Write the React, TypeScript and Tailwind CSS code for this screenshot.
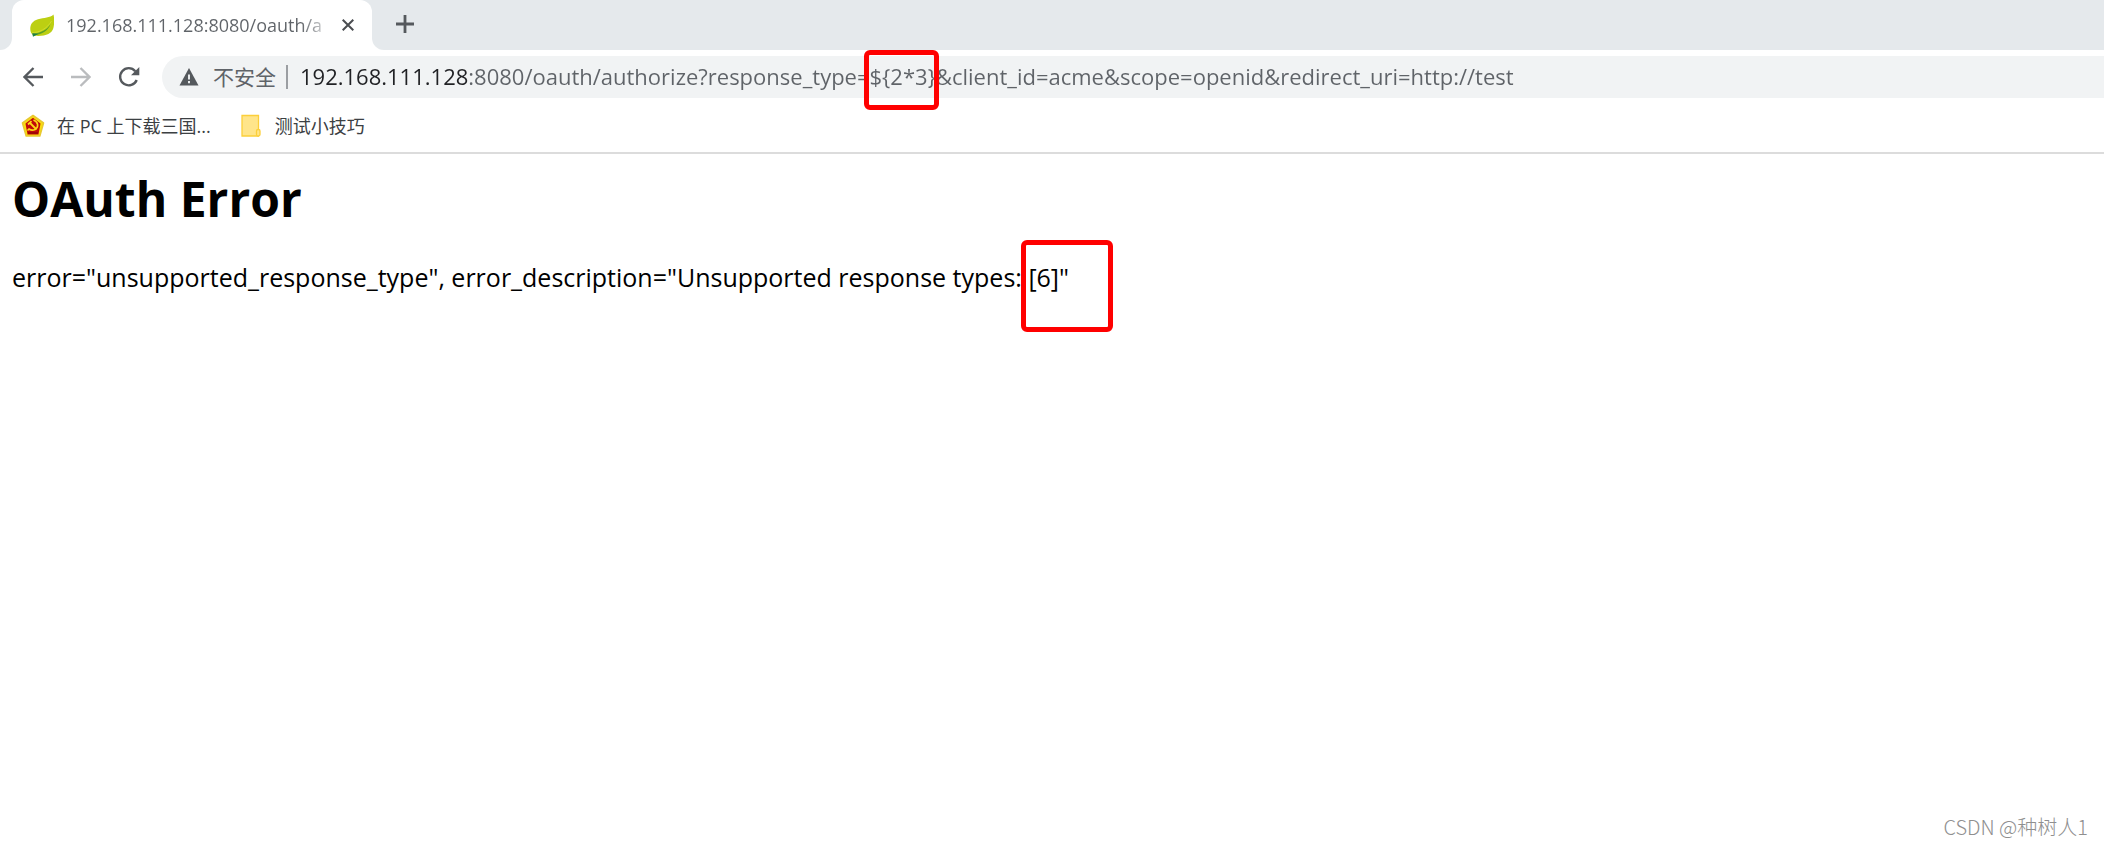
import React, { useState } from "react";

const PAGE_URL =
  "192.168.111.128:8080/oauth/authorize?response_type=${2*3}&client_id=acme&scope=openid&redirect_uri=http://test";

function LeafIcon() {
  return (
    <svg viewBox="0 0 24 24" className="size-6 shrink-0" aria-hidden="true">
      <path d="M23.500 1.500C20 5 14 4.500 8 6.200C2 8 0 12 .3 16.500C.6 20 2.500 22.500 5 22.800C15 23.500 22 21 23.400 15C24.500 10 24.500 6 23.500 1.500Z" fill="#bccf12" />
      <path d="M3 20.500C11 20 17 17 20.500 11C18 18 12 21.500 3 22.500Z" fill="#5a9f28" />
      <path d="M2 19.800C9 19.500 17 16 21.500 8" fill="none" stroke="#d0dd2c" strokeWidth="1" />
      <path d="M2.200 20.200L8 21L3 23.800Z" fill="#1c8048" />
    </svg>
  );
}

function EmblemIcon() {
  return (
    <svg viewBox="0 0 24 24" className="size-6 shrink-0" aria-hidden="true">
      <path d="M12 1.500L22.500 9L18.800 22H5.200L1.500 9Z" fill="#fbe108" stroke="#e8c930" strokeWidth="1.600" strokeLinejoin="round" />
      <path d="M12 3.800L19.500 9.500L17.500 20.500H6.500L4.500 9.500Z" fill="#c00a0a" />
      <path d="M12.500 6C17.500 8 18 13 14 15.500C11.500 16.800 9.500 16 8 15L6.500 16.500" fill="none" stroke="#fbd816" strokeWidth="1.600" />
      <path d="M7 10.500L10.500 7.200M9 9L15.500 15.500" fill="none" stroke="#fbd816" strokeWidth="1.800" />
      <path d="M7 19H17" stroke="#a00505" strokeWidth="2" />
    </svg>
  );
}

function FolderIcon() {
  return (
    <svg viewBox="0 0 20 24" className="h-6 w-5 shrink-0" aria-hidden="true">
      <path d="M1 1.500H17.500V15.500H16.500V22H1Z" fill="#ffe58a" />
      <path d="M17.500 15V1.500H1V22H18" fill="none" stroke="#fccf3a" strokeWidth="1.300" />
      <rect x="15.500" y="15.500" width="3.500" height="6.500" rx="1.500" fill="#ffe58a" stroke="#fccf3a" strokeWidth="1.300" />
    </svg>
  );
}

function TabStrip() {
  return (
    <div className="flex h-[50px] bg-white">
      <div className="w-3 shrink-0 rounded-br-xl bg-[#e5e9ec]" />
      <div className="shrink-0 bg-[#e5e9ec]">
        <div className="flex h-full w-[360px] items-center rounded-t-xl bg-white pl-[18px]">
          <LeafIcon />
          <span className="ml-3 w-[262px] shrink-0 bg-[linear-gradient(90deg,#5f6368_235px,#ffffff_268px)] bg-clip-text text-lg whitespace-nowrap text-transparent">
            192.168.111.128:8080/oauth/a
          </span>
          <button type="button" aria-label="Close tab" className="ml-1 flex size-8 shrink-0 items-center justify-center">
            <svg viewBox="0 0 12 12" className="size-3" aria-hidden="true">
              <path d="M.7.7L11.300 11.300M11.300.7L.7 11.300" stroke="#4a4d51" strokeWidth="2" />
            </svg>
          </button>
        </div>
      </div>
      <div className="flex-1 rounded-bl-xl bg-[#e5e9ec] pl-[17px]">
        <button type="button" aria-label="New tab" className="flex h-12 w-8 items-center justify-center">
          <svg viewBox="0 0 18 18" className="size-[18px]" aria-hidden="true">
            <path d="M9 0V18M0 9H18" stroke="#55595d" strokeWidth="2.800" />
          </svg>
        </button>
      </div>
    </div>
  );
}

function Toolbar() {
  const [url, setUrl] = useState(PAGE_URL);
  return (
    <div className="flex items-center py-[6px] pl-[17px]">
      <button type="button" aria-label="Back" className="flex h-10 w-8 items-center justify-center">
        <svg viewBox="0 0 20 20" className="size-5" fill="none" stroke="#55595d" strokeWidth="2.300" aria-hidden="true">
          <path d="M20 10H2M10.500 1L1.500 10L10.500 19" />
        </svg>
      </button>
      <button type="button" aria-label="Forward" className="ml-4 flex h-10 w-8 items-center justify-center">
        <svg viewBox="0 0 20 20" className="size-5" fill="none" stroke="#babcbe" strokeWidth="2.300" aria-hidden="true">
          <path d="M0 10H18M9.500 1L18.500 10L9.500 19" />
        </svg>
      </button>
      <button type="button" aria-label="Reload" className="ml-4 flex h-10 w-8 items-center justify-center">
        <svg viewBox="0 0 22 22" className="size-[22px]" aria-hidden="true">
          <path d="M18.700 14A8.600 8.600 0 1 1 17.300 5.200" fill="none" stroke="#55595d" strokeWidth="2.400" />
          <path d="M21.300 1V9.300H13Z" fill="#55595d" />
        </svg>
      </button>
      <div className="relative ml-[17px] flex h-[42px] flex-1 items-center rounded-l-full bg-[#f1f3f4] pl-[17px]">
        <svg viewBox="0 0 20 18" className="h-[18px] w-5 shrink-0" aria-hidden="true">
          <path d="M10 0L19.500 17.500H.5Z" fill="#55595d" />
          <path d="M10 6.500V11.500M10 13V15.200" stroke="#f1f3f4" strokeWidth="1.900" />
        </svg>
        <span className="ml-[14px] shrink-0 text-[21px] leading-8 text-[#5f6368]">不安全</span>
        <span className="ml-[10px] h-6 w-[2px] shrink-0 bg-[#9b9ea2]" />
        <input
          type="text"
          aria-label="Address"
          spellCheck={false}
          value={url}
          onChange={(e) => setUrl(e.target.value)}
          className="ml-3 h-8 min-w-0 flex-1 bg-[linear-gradient(90deg,#202124_168px,#5f6368_168px)] bg-clip-text pb-[2px] text-[22px] text-transparent caret-black outline-none"
        />
        <span className="pointer-events-none absolute -top-[6px] left-[702px] h-[60px] w-[75px] rounded-md border-5 border-[#ff0000]" />
      </div>
    </div>
  );
}

function Bookmarks() {
  return (
    <nav className="flex h-[50px] items-center gap-[30px] border-b-2 border-[#dcdcdc] pb-1 pl-[21px] text-lg text-[#3c4043]">
      <a href="#game" className="flex items-center gap-3 whitespace-nowrap">
        <EmblemIcon />
        <span>在 PC 上下载三国...</span>
      </a>
      <a href="#notes" className="flex items-center gap-[14px] whitespace-nowrap">
        <FolderIcon />
        <span>测试小技巧</span>
      </a>
    </nav>
  );
}

export default function App() {
  return (
    <div className="flex min-h-screen flex-col bg-white font-['Open_Sans','Noto_Sans_CJK_SC',sans-serif]">
      <header>
        <TabStrip />
        <Toolbar />
        <Bookmarks />
      </header>
      <main className="flex-1 px-3 pt-[10px] text-black">
        <h1 className="text-5xl leading-[70px] font-bold">OAuth Error</h1>
        <p className="mt-[25px] w-fit text-[25px] leading-9 whitespace-nowrap">
          error="unsupported_response_type", error_description="Unsupported response types:{" "}
          <span className="relative">
            [6]
            <span className="pointer-events-none absolute -top-5 -left-[7px] h-[92px] w-[92px] rounded-md border-5 border-[#ff0000]" />
          </span>
          "
        </p>
      </main>
      <footer className="px-4 pb-1 text-right font-['Noto_Sans_CJK_SC',sans-serif] text-xl leading-8 font-light text-[#8f8f8f]">
        CSDN @种树人1
      </footer>
    </div>
  );
}
